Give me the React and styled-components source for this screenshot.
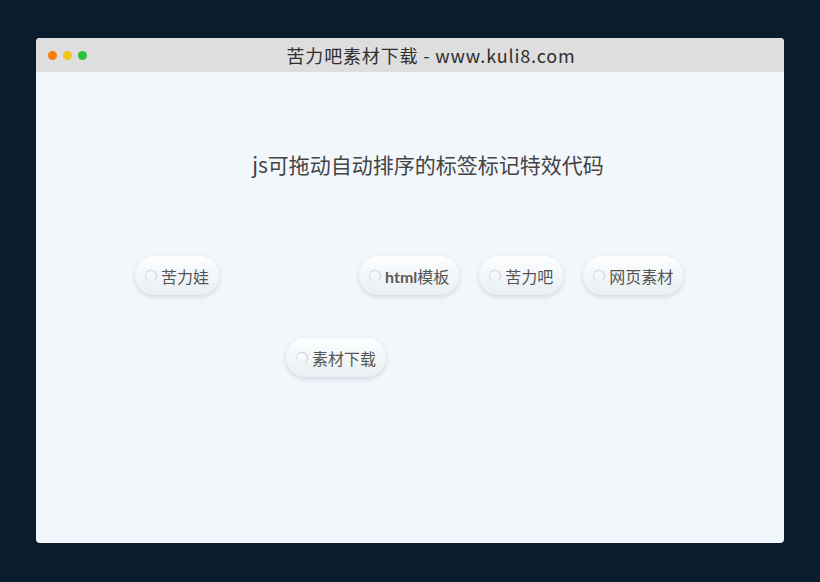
import { useState } from "react"
import styled, { createGlobalStyle } from "styled-components"

const GlobalStyle = createGlobalStyle`
    html, body {
        margin: 0;
        padding: 0;
        background: #0b1c2c;
    }
    * { box-sizing: border-box; }
`;

// each row is a list of slots, null = empty slot left behind by a drag
const startRows = [
    { offset: 99, slots: [{ id: 1, text: "苦力娃" }, null, { id: 2, text: "html", rest: "模板" }, { id: 3, text: "苦力吧" }, { id: 4, text: "网页素材" }] },
    { offset: 250, slots: [{ id: 5, text: "素材下载" }] },
];

export default function App(){
    const [rows, setRows] = useState(startRows);
    const [drag, setDrag] = useState(null);

    function drop(r, s){
        if(!drag) return;
        const next = rows.map(row => ({ ...row, slots: [...row.slots] }));
        const item = next[drag.r].slots[drag.s];
        next[drag.r].slots[drag.s] = next[r].slots[s] || null;
        next[r].slots[s] = item;
        setRows(next);
        setDrag(null);
    }

    return(
        <Page>
            <GlobalStyle/>
            <Window>
                <TitleBar>
                    <Dots>
                        <Dot color="#fb7c0a"/>
                        <Dot color="#efc61c"/>
                        <Dot color="#2cc13c"/>
                    </Dots>
                    <Title>苦力吧素材下载 - www.kuli8.com</Title>
                </TitleBar>
                <Content>
                    <Heading>js可拖动自动排序的标签标记特效代码</Heading>
                    <Board>
                        {rows.map((row, r) => (
                            <Row key={r} offset={row.offset}>
                                {row.slots.map((tag, s) => tag ? (
                                    <Tag key={tag.id} draggable onDragStart={() => setDrag({ r, s })} onDragOver={e => e.preventDefault()} onDrop={() => drop(r, s)}>
                                        <Radio/>
                                        <span>{tag.rest ? <><b>{tag.text}</b>{tag.rest}</> : tag.text}</span>
                                    </Tag>
                                ) : (
                                    <Empty key={"e" + s} onDragOver={e => e.preventDefault()} onDrop={() => drop(r, s)}/>
                                ))}
                            </Row>
                        ))}
                    </Board>
                </Content>
            </Window>
        </Page>
    )
}

const Page = styled.div`
    width: 820px;
    height: 582px;
    padding: 38px 36px 0 36px;
`;

const Window = styled.div`
    width: 748px;
    height: 505px;
    background: #f2f7fc;
    border-radius: 4px;
    overflow: hidden;
    display: flex;
    flex-direction: column;
`;

const TitleBar = styled.div`
    height: 34px;
    background: #dedede;
    display: flex;
    align-items: center;
    padding-left: 12px;
`;

const Dots = styled.div`
    display: flex;
    gap: 6px;
`;

const Dot = styled.span`
    width: 9px;
    height: 9px;
    border-radius: 50%;
    background: ${p => p.color};
`;

const Title = styled.div`
    flex: 1;
    text-align: center;
    margin-right: 9px;
    font-family: "Noto Sans CJK SC", sans-serif;
    font-size: 18px;
    color: #2e2e2e;
    letter-spacing: 0.85px;
`;

const Content = styled.div`
    flex: 1;
    display: flex;
    flex-direction: column;
`;

const Heading = styled.h1`
    margin: 77px 0 0 0;
    text-align: center;
    font-family: "Noto Sans CJK SC", sans-serif;
    font-weight: 400;
    font-size: 21px;
    line-height: 30px;
    color: #444;
    padding-left: 36px;
`;

const Board = styled.div`
    margin-top: 77px;
    display: flex;
    flex-direction: column;
    gap: 43px;
`;

const Row = styled.div`
    display: flex;
    gap: 20px;
    padding-left: ${p => p.offset}px;
`;

const Tag = styled.div`
    height: 39px;
    padding: 0 10px 0 10px;
    border-radius: 20px;
    background: linear-gradient(#fdfeff, #e8eff2);
    box-shadow: 0 2px 5px rgba(60, 80, 100, 0.18);
    display: flex;
    align-items: center;
    gap: 4px;
    font-family: "Noto Sans CJK SC", sans-serif;
    font-size: 16px;
    color: #555;
    cursor: move;
    user-select: none;
    b {
        font-family: Lato, sans-serif;
        font-weight: 700;
        color: #5a5a5a;
    }
`;

const Radio = styled.span`
    width: 12px;
    height: 12px;
    border-radius: 50%;
    border: 1px solid #c9cfd3;
    border-bottom-color: #eef2f4;
    border-left-color: #dde2e5;
    background: linear-gradient(#fbfcfd, #eef3f5);
`;

const Empty = styled.div`
    width: 100px;
    height: 39px;
`;
